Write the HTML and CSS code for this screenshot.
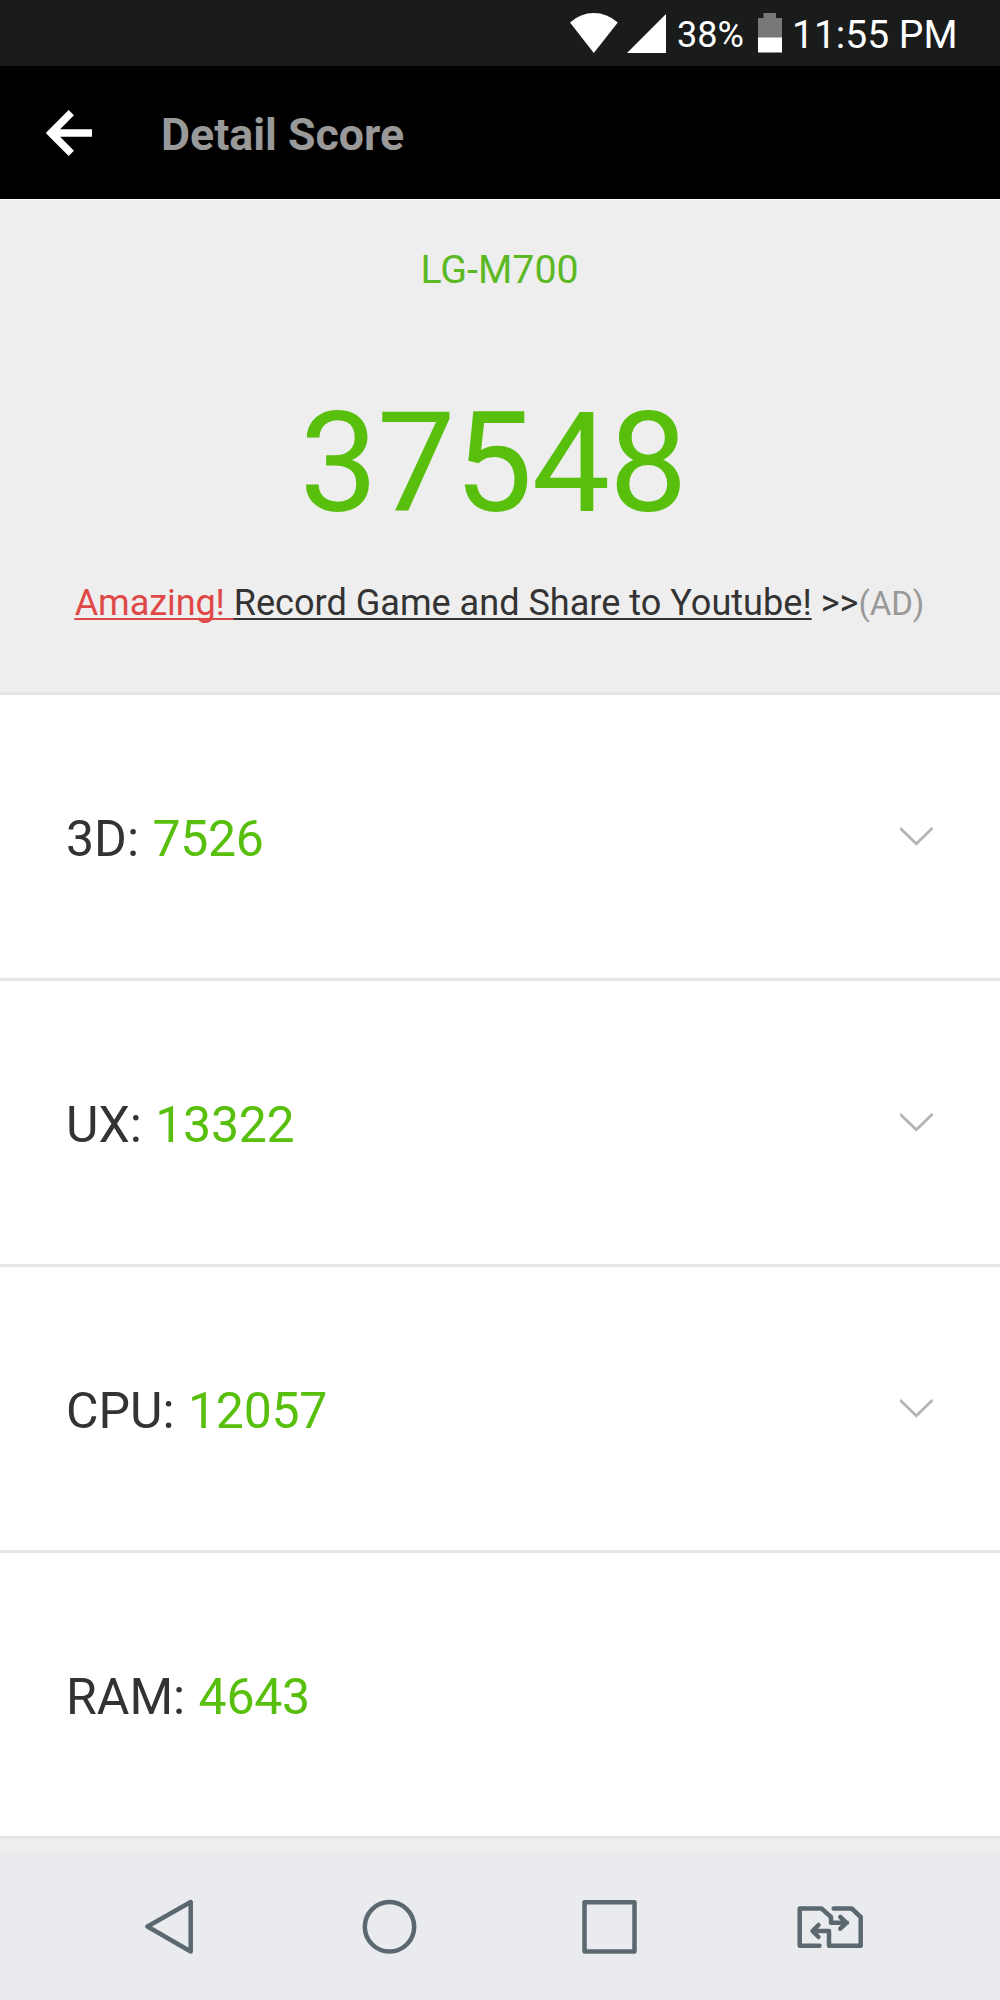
FILE: index.html
```html
<!DOCTYPE html>
<html lang="en">
<head>
<meta charset="utf-8">
<title>Detail Score</title>
<link rel="stylesheet" href="styles.css">
</head>
<body>
<div class="screen">
  <div class="status-bar">
    <svg class="wifi" width="48" height="40" viewBox="0 0 48 40"><path d="M0 9.500Q10.500 0 23.800 0T47.800 9.500L23.800 40Z" fill="#fff"/></svg>
    <svg class="signal" width="39" height="39" viewBox="0 0 39 39"><path d="M39 0V39H0Z" fill="#fff"/></svg>
    <span class="battery-level">38%</span>
    <svg class="battery" width="24" height="40" viewBox="0 0 24 40"><path d="M5.500 0H18V5H24V25H0V5H5.500Z" fill="#777978"/><path d="M0 24.500H24V39.500H0Z" fill="#fff"/></svg>
    <span class="clock">11:55 PM</span>
  </div>
  <header class="app-bar">
    <svg class="back" width="46" height="46" viewBox="0 0 46 46"><path d="M46 23H6M25.300 2.700L5 23L25.300 43.300" fill="none" stroke="#fff" stroke-width="7.500"/></svg>
    <h1 class="title">Detail Score</h1>
  </header>
  <section class="summary">
    <div class="device">LG-M700</div>
    <div class="total">37548</div>
    <div class="promo"><span class="link"><span class="hot">Amazing! </span>Record Game and Share to Youtube!</span> &gt;&gt;<span class="ad">(AD)</span></div>
  </section>
  <main class="scores">
    <div class="row"><span class="label">3D: <span class="value">7526</span></span><svg class="chevron" width="34" height="20" viewBox="0 0 34 20"><path d="M0 1L16.300 16.800L32.500 1" fill="none" stroke="#b5b5b5" stroke-width="2.800"/></svg></div>
    <div class="row"><span class="label">UX: <span class="value">13322</span></span><svg class="chevron" width="34" height="20" viewBox="0 0 34 20"><path d="M0 1L16.300 16.800L32.500 1" fill="none" stroke="#b5b5b5" stroke-width="2.800"/></svg></div>
    <div class="row"><span class="label">CPU: <span class="value">12057</span></span><svg class="chevron" width="34" height="20" viewBox="0 0 34 20"><path d="M0 1L16.300 16.800L32.500 1" fill="none" stroke="#b5b5b5" stroke-width="2.800"/></svg></div>
    <div class="row"><span class="label">RAM: <span class="value">4643</span></span></div>
  </main>
  <nav class="nav-bar">
    <svg width="66" height="56" viewBox="0 0 66 56"><path d="M53.700 3V52.500L10.500 27.500Z"/></svg>
    <svg width="66" height="56" viewBox="0 0 66 56"><circle cx="32.500" cy="27.800" r="24.700"/></svg>
    <svg width="66" height="56" viewBox="0 0 66 56"><path d="M7.500 3.200H57.500V52.500H7.500Z"/></svg>
    <svg width="66" height="56" viewBox="0 0 66 56"><path d="M22.500 46.700H2.700V9.500H24.500L34 18V23.800H50M43.300 18L49.500 23.800L43.300 29.700M36.700 9.500H54.700L63.700 18V46.700H32V32H17M21.500 26L15.500 32L21.500 38"/></svg>
  </nav>
</div>
</body>
</html>
```

FILE: styles.css
```css
* { box-sizing: border-box; }
body { margin: 0; }
svg { display: block; flex: none; }

.screen {
  width: 1000px;
  height: 2000px;
  display: flex;
  flex-direction: column;
  background: #eee;
  color: #333;
  font-family: Roboto, sans-serif;
  white-space: nowrap;
  overflow: hidden;
}

.status-bar {
  height: 66px;
  padding-left: 570px;
  display: flex;
  align-items: flex-start;
  background: #1a1c1b;
  color: #fff;
}
.wifi { margin-top: 13px; }
.signal { margin: 14px 0 0 9px; }
.battery-level { width: 67px; margin-left: 11px; font-size: 36px; line-height: 70px; }
.battery { margin: 13px 0 0 14px; }
.clock { margin-left: 10px; font-size: 39px; line-height: 70px; }

.app-bar {
  height: 133px;
  padding-left: 46px;
  display: flex;
  align-items: center;
  background: #000;
}
.title {
  margin: 4px 0 0 69px;
  color: #999;
  font-size: 44.700px;
  font-weight: 700;
  line-height: 60px;
}

.summary {
  height: 496px;
  padding-top: 45px;
  border-top: 1px solid #fafafa;
  border-bottom: 3px solid #e6e6e6;
  text-align: center;
}
.device { padding-right: 1px; color: #5cb925; font-size: 39.300px; line-height: 50px; }
.total {
  margin-top: 88px;
  padding-right: 14px;
  color: #58bf0d;
  font-size: 139.700px;
  line-height: 160px;
  letter-spacing: -1.100px;
}
.promo { margin-top: 35px; padding-right: 1px; font-size: 36.100px; line-height: 51px; }
.link, .hot {
  text-decoration: underline 2px;
  text-underline-offset: 3px;
  text-decoration-skip-ink: none;
}
.hot { color: #e04848; letter-spacing: -0.100px; }
.ad { color: #999; font-size: 33px; }

.row {
  height: 286px;
  padding: 0 66px;
  display: flex;
  align-items: center;
  justify-content: space-between;
  background: #fff;
  border-bottom: 3px solid #e6e6e6;
}
.label { padding-top: 5px; font-size: 50px; line-height: 60px; }
.value { margin-left: 1px; color: #58bf0d; letter-spacing: -0.300px; }

.nav-bar {
  margin-top: auto;
  height: 146px;
  padding: 45px 137px 0;
  display: flex;
  justify-content: space-between;
  background: #e9ebee;
}
.nav-bar svg {
  fill: none;
  stroke: #5c6870;
  stroke-width: 4.500px;
  stroke-linecap: round;
  stroke-linejoin: round;
}
```
